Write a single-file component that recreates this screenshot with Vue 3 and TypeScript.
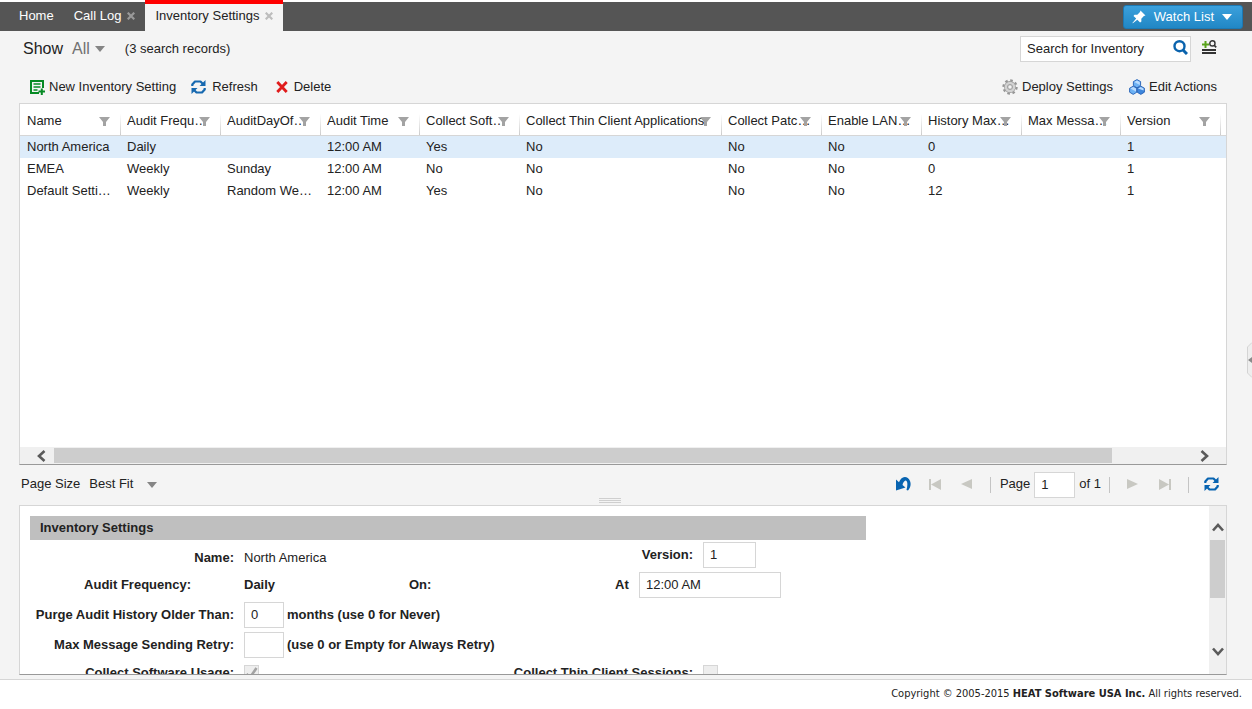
<script setup lang="ts">
import { ref } from 'vue'

interface Column {
  key: string
  title: string
  width: number
}

type Row = Record<string, string>

const columns: Column[] = [
  { key: 'name', title: 'Name', width: 100 },
  { key: 'frequency', title: 'Audit Frequency', width: 100 },
  { key: 'day', title: 'AuditDayOfWeek', width: 100 },
  { key: 'time', title: 'Audit Time', width: 99 },
  { key: 'usage', title: 'Collect Software Usage', width: 100 },
  { key: 'thin', title: 'Collect Thin Client Applications', width: 202 },
  { key: 'patch', title: 'Collect Patches', width: 100 },
  { key: 'lan', title: 'Enable LANDiscovery', width: 100 },
  { key: 'history', title: 'History MaxAge', width: 100 },
  { key: 'retry', title: 'Max Messages', width: 99 },
  { key: 'version', title: 'Version', width: 100 },
]

const rows: Row[] = [
  { name: 'North America', frequency: 'Daily', day: '', time: '12:00 AM', usage: 'Yes', thin: 'No', patch: 'No', lan: 'No', history: '0', retry: '', version: '1' },
  { name: 'EMEA', frequency: 'Weekly', day: 'Sunday', time: '12:00 AM', usage: 'No', thin: 'No', patch: 'No', lan: 'No', history: '0', retry: '', version: '1' },
  { name: 'Default Settings', frequency: 'Weekly', day: 'Random Weekday', time: '12:00 AM', usage: 'Yes', thin: 'No', patch: 'No', lan: 'No', history: '12', retry: '', version: '1' },
]

const selected = ref(0)
const search = ref('')
const page = ref('1')
const version = ref('1')
const auditTime = ref('12:00 AM')
const purgeMonths = ref('0')
const maxRetry = ref('')
</script>

<template>
  <div class="app">
    <header class="topbar">
      <nav class="tabs">
        <a class="tab" href="#home">Home</a>
        <div class="tab">
          <a href="#calllog">Call Log</a>
          <button class="close" type="button" aria-label="Close Call Log">
            <svg width="8" height="8" viewBox="0 0 8 8"><path d="M.7.7l6.600 6.600M7.300.7L.7 7.300" stroke="currentColor" stroke-width="2.200" /></svg>
          </button>
        </div>
        <div class="tab active">
          <a href="#inventory">Inventory Settings</a>
          <button class="close" type="button" aria-label="Close Inventory Settings">
            <svg width="8" height="8" viewBox="0 0 8 8"><path d="M.7.7l6.600 6.600M7.300.7L.7 7.300" stroke="currentColor" stroke-width="2.200" /></svg>
          </button>
        </div>
      </nav>
      <button class="watch" type="button">
        <svg width="14" height="14" viewBox="0 0 14 14">
          <path d="M8.5 0.5l5 5-1.6.6-2.6 2.7.1 2.7-1.3 1L5.3 9.7.8 13.3.4 13l3.8-4.4L1.5 5.9l1-1.2 2.8.1L8 2.1z" fill="#fff" />
        </svg>
        <span>Watch List</span>
        <svg width="10" height="6" viewBox="0 0 10 6"><path d="M0 0h10L5 6z" fill="#fff" /></svg>
      </button>
    </header>

    <section class="filterbar">
      <span class="show">Show</span>
      <button class="all" type="button">
        All
        <svg width="10" height="6" viewBox="0 0 10 6"><path d="M0 0h10L5 6z" fill="#858585" /></svg>
      </button>
      <span class="count">(3 search records)</span>
      <form class="search" @submit.prevent>
        <input v-model="search" type="text" placeholder="Search for Inventory" aria-label="Search for Inventory" />
        <button type="submit" aria-label="Search">
          <svg width="15" height="15" viewBox="0 0 15 15" fill="none" stroke="#0a63ad">
            <circle cx="6.5" cy="6.2" r="5" stroke-width="2.4" />
            <path d="M10 10l4 4" stroke-width="3" />
          </svg>
        </button>
      </form>
      <button class="advanced" type="button" aria-label="Advanced search">
        <svg width="15" height="14" viewBox="0 0 15 14" fill="none">
          <path d="M0 4.5h7M3.5 1v7" stroke="#5aa31c" stroke-width="2" />
          <circle cx="10.4" cy="3.4" r="2.6" stroke="#333" stroke-width="1.4" />
          <path d="M12.2 5.2l2 2.2" stroke="#333" stroke-width="1.6" />
          <path d="M0 10h14M0 13h14" stroke="#333" stroke-width="1.8" />
        </svg>
      </button>
    </section>

    <section class="toolbar">
      <button class="tool new" type="button">
        <svg width="15" height="16" viewBox="0 0 15 16" fill="none" stroke="#068a24">
          <path d="M9 14H1V2h12v7" stroke-width="2" />
          <path d="M3.5 5h7M3.5 8h7M3.5 11h4" stroke-width="1.4" />
          <path d="M8.5 12.5H15M11.8 9.5V16" stroke-width="2" />
        </svg>
        New Inventory Setting
      </button>
      <button class="tool refresh" type="button">
        <svg width="15" height="14" viewBox="0 0 15 14" fill="none">
          <path d="M1.300 6V4.500L4 1.500h5.500L12 4M13.700 8v1.500L11 12.500H5.500L3 10" stroke="#1769b0" stroke-width="2.200" stroke-linejoin="round" />
          <path d="M14.500 0v6H8.500zM.5 14V8h6z" fill="#1769b0" />
        </svg>
        Refresh
      </button>
      <button class="tool delete" type="button">
        <svg width="12" height="12" viewBox="0 0 12 12"><path d="M1.3 1l9.4 10M10.7 1L1.3 11" stroke="#e01b1b" stroke-width="2.8" /></svg>
        Delete
      </button>
      <button class="tool deploy" type="button">
        <svg width="16" height="16" viewBox="0 0 16 16">
          <circle cx="8" cy="8" r="6.600" fill="none" stroke="#969696" stroke-width="2.200" stroke-dasharray="2.600 2.584" />
          <circle cx="8" cy="8" r="4" fill="none" stroke="#969696" stroke-width="3.800" />
          <circle cx="8" cy="8" r="4" fill="none" stroke="#d2d2d2" stroke-width="2.600" />
          <circle cx="8" cy="8" r="2.200" fill="#f4f4f4" stroke="#999" stroke-width=".8" />
        </svg>
        Deploy Settings
      </button>
      <button class="tool edit" type="button">
        <svg width="16" height="16" viewBox="0 0 16 16" stroke="#2460b5" stroke-width=".9">
          <path d="M8 .6l3.6 2v4L8 8.8l-3.600-2.200v-4z" fill="#6db2f4" />
          <path d="M4.2 7.2l3.6 2v4l-3.6 2.2-3.6-2.2v-4z" fill="#6db2f4" />
          <path d="M11.8 7.2l3.6 2v4l-3.6 2.2-3.6-2.2v-4z" fill="#3d86dc" />
          <path d="M8 1.400l2.800 1.500v3L5.200 2.900zM4.200 8l2.800 1.500v3L1.400 9.500zM11.800 8l2.800 1.500v2L9 9.500z" fill="#b9dcff" stroke="none" />
        </svg>
        Edit Actions
      </button>
    </section>

    <section class="gridpanel">
      <div class="gridbody">
        <table class="grid">
          <colgroup>
            <col v-for="c in columns" :key="c.key" :style="{ width: c.width + 'px' }" />
            <col />
          </colgroup>
          <thead>
            <tr>
              <th v-for="c in columns" :key="c.key" scope="col">
                <span class="title">{{ c.title }}</span>
                <button class="filter" type="button" :aria-label="'Filter ' + c.title">
                  <svg width="11" height="9" viewBox="0 0 11 9"><path d="M0 0h11L7 5v4H4V5z" fill="#a3a3a3" /></svg>
                </button>
              </th>
              <th class="filler" aria-hidden="true"></th>
            </tr>
          </thead>
          <tbody>
            <tr v-for="(r, i) in rows" :key="i" :class="{ selected: i === selected }" @click="selected = i">
              <td v-for="c in columns" :key="c.key">{{ r[c.key] }}</td>
              <td class="filler"></td>
            </tr>
          </tbody>
        </table>
      </div>
      <div class="hscroll">
        <button type="button" aria-label="Scroll left">
          <svg width="10" height="12" viewBox="0 0 10 12"><path d="M8.5 1L3 6l5.5 5" fill="none" stroke="#5a5a5a" stroke-width="2.6" /></svg>
        </button>
        <div class="track"><div class="thumb"></div></div>
        <button class="end" type="button" aria-label="Scroll right">
          <svg width="10" height="12" viewBox="0 0 10 12"><path d="M1.5 1L7 6l-5.5 5" fill="none" stroke="#5a5a5a" stroke-width="2.6" /></svg>
        </button>
      </div>
    </section>

    <section class="pager">
      <label for="pagesize">Page Size</label>
      <div class="sizebox">
        <select id="pagesize">
          <option>Best Fit</option>
          <option>25</option>
          <option>50</option>
        </select>
        <svg width="10" height="6" viewBox="0 0 10 6"><path d="M0 0h10L5 6z" fill="#858585" /></svg>
      </div>
      <div class="pages">
        <button class="undo" type="button" aria-label="Undo">
          <svg width="15" height="14" viewBox="0 0 15 14">
            <path d="M0 2.500V13.500L9.500 10.500 6.500 8C7 5.500 8.500 3.200 9.800 3.500c1.900.5 2 4.500.7 9.500l1.500.5C14.500 11 15.300 7 14 4 12.500.3 9 -.8 6.500.8 4.800 1.800 3.700 3.500 3 5.200z" fill="#0864b1" />
          </svg>
        </button>
        <button class="first" type="button" aria-label="First page">
          <svg width="12" height="11" viewBox="0 0 12 11"><path d="M0 0h2v11H0zM12 0v11L2 5.500z" fill="#c8c8c2" /></svg>
        </button>
        <button class="prev" type="button" aria-label="Previous page">
          <svg width="11" height="10" viewBox="0 0 11 10"><path d="M11 0v10L0 5z" fill="#c8c8c2" /></svg>
        </button>
        <i class="sep"></i>
        <label for="page">Page</label>
        <input id="page" v-model="page" type="text" />
        <span class="of">of 1</span>
        <i class="sep"></i>
        <button class="next" type="button" aria-label="Next page">
          <svg width="11" height="10" viewBox="0 0 11 10"><path d="M0 0v10l11-5z" fill="#c8c8c2" /></svg>
        </button>
        <button class="last" type="button" aria-label="Last page">
          <svg width="12" height="11" viewBox="0 0 12 11"><path d="M10 0h2v11h-2zM0 0v11l10-5.500z" fill="#c8c8c2" /></svg>
        </button>
        <i class="sep"></i>
        <button class="reload" type="button" aria-label="Reload">
          <svg width="15" height="14" viewBox="0 0 15 14" fill="none">
            <path d="M1.300 6V4.500L4 1.500h5.500L12 4M13.700 8v1.500L11 12.500H5.500L3 10" stroke="#0864b1" stroke-width="2.200" stroke-linejoin="round" />
            <path d="M14.500 0v6H8.500zM.5 14V8h6z" fill="#0864b1" />
          </svg>
        </button>
      </div>
    </section>

    <div class="grip"><i></i><i></i><i></i></div>

    <section class="detail">
      <form class="form" @submit.prevent>
        <h2>Inventory Settings</h2>
        <div class="row name">
          <span class="lab">Name:</span>
          <span class="value">North America</span>
          <label class="lab" for="version">Version:</label>
          <div class="field"><input id="version" v-model="version" class="w53" type="text" /></div>
        </div>
        <div class="row schedule">
          <span class="lab freq">Audit Frequency:</span>
          <b>Daily</b>
          <b>On:</b>
          <label for="at">At</label>
          <input id="at" v-model="auditTime" class="w142" type="text" />
        </div>
        <div class="row">
          <label class="lab" for="purge">Purge Audit History Older Than:</label>
          <div class="field"><input id="purge" v-model="purgeMonths" class="w40" type="text" /><b>months (use 0 for Never)</b></div>
        </div>
        <div class="row">
          <label class="lab" for="retry">Max Message Sending Retry:</label>
          <div class="field"><input id="retry" v-model="maxRetry" class="w40" type="text" /><b>(use 0 or Empty for Always Retry)</b></div>
        </div>
        <div class="row short">
          <label class="lab" for="usage">Collect Software Usage:</label>
          <div class="field check">
            <input id="usage" type="checkbox" checked disabled />
            <svg width="13" height="12" viewBox="0 0 13 12"><path d="M1.500 7l3.500 3.500L11.500 1" fill="none" stroke="#a3a3a3" stroke-width="2.600" /></svg>
          </div>
          <label class="lab" for="sessions">Collect Thin Client Sessions:</label>
          <div class="field check"><input id="sessions" type="checkbox" disabled /></div>
        </div>
      </form>
      <div class="vscroll">
        <button type="button" aria-label="Scroll up">
          <svg width="12" height="10" viewBox="0 0 12 10"><path d="M1 8.500L6 3l5 5.500" fill="none" stroke="#5a5a5a" stroke-width="2.600" /></svg>
        </button>
        <div class="track"><div class="thumb"></div></div>
        <button class="end" type="button" aria-label="Scroll down">
          <svg width="12" height="10" viewBox="0 0 12 10"><path d="M1 1.500L6 7l5-5.500" fill="none" stroke="#5a5a5a" stroke-width="2.600" /></svg>
        </button>
      </div>
    </section>

    <footer class="footer">Copyright © 2005-2015 <b>HEAT Software USA Inc.</b> All rights reserved.</footer>

    <button class="collapse" type="button" aria-label="Expand side panel">
      <svg width="5" height="36" viewBox="0 0 5 36">
        <path d="M5 .5L.5 5v26L5 35.500" fill="#eee" stroke="#d4d4d4" />
        <path d="M5 15v6L1 18z" fill="#8a8a8a" />
      </svg>
    </button>
  </div>
</template>

<style>
html,
body {
  margin: 0;
  background: #fff;
}
</style>

<style scoped>
.app {
  position: relative;
  display: flex;
  flex-direction: column;
  min-height: 100vh;
  background: #f4f4f4;
  color: #222;
  font: 13px/16px "Liberation Sans", Arial, sans-serif;
  overflow: hidden;
}
.app * {
  box-sizing: border-box;
}
button {
  display: inline-flex;
  align-items: center;
  padding: 0;
  border: 0;
  background: none;
  color: inherit;
  font: inherit;
  white-space: nowrap;
  cursor: pointer;
}
svg {
  display: block;
  flex: none;
}
a {
  color: inherit;
  text-decoration: none;
}
input[type="text"] {
  height: 26px;
  margin: 0;
  padding: 0 6px 2px;
  border: 1px solid #d6d6d6;
  border-radius: 0;
  background: #fff;
  color: #222;
  font: inherit;
  outline: none;
}

.topbar {
  display: flex;
  justify-content: space-between;
  align-items: flex-start;
  height: 31px;
  padding-right: 9px;
  background: linear-gradient(#fff 2px, #555 2px);
}
.tabs {
  display: flex;
  padding-left: 9px;
  color: #fff;
}
.tab {
  display: flex;
  align-items: center;
  gap: 6px;
  height: 31px;
  padding: 0 10px;
}
.close {
  color: #999;
}
.active {
  border-top: 4px solid #f00;
  padding-bottom: 4px;
  background: #f4f4f4;
  color: #222;
}
.active .close {
  color: #bdbdbd;
}
.watch {
  gap: 8px;
  height: 24px;
  margin-top: 5px;
  padding: 0 10px 0 8px;
  border: 1px solid #1c79b4;
  border-radius: 3px;
  background: linear-gradient(#3ba0dc, #2187c5);
  color: #fff;
}

.filterbar {
  display: flex;
  align-items: center;
  height: 35px;
  padding: 0 35px 0 23px;
}
.show {
  font-size: 16px;
}
.all {
  gap: 5px;
  margin-left: 9px;
  color: #707070;
  font-size: 16px;
}
.count {
  margin-left: 20px;
}
.search {
  position: relative;
  width: 171px;
  margin-left: auto;
}
.search input {
  width: 100%;
  padding: 0 24px 0 6px;
}
.search input::placeholder {
  color: #222;
  opacity: 1;
}
.search button {
  position: absolute;
  right: 3px;
  top: 4px;
}
.advanced {
  margin: 0 0 3px 11px;
}

.toolbar {
  display: flex;
  align-items: center;
  height: 37px;
  padding: 4px 35px 0 30px;
}
.tool {
  gap: 4px;
}
.refresh {
  gap: 6px;
  margin-left: 15px;
}
.delete {
  gap: 6px;
  margin-left: 18px;
}
.deploy {
  margin-left: auto;
}
.edit {
  margin-left: 16px;
}

.gridpanel {
  display: flex;
  flex: 1;
  flex-direction: column;
  min-height: 200px;
  margin: 0 25px 0 19px;
  border: 1px solid #d6d6d6;
  border-bottom-color: #999;
  background: #fff;
}
.gridbody {
  flex: 1;
  overflow: hidden;
}
.grid {
  width: 100%;
  border-collapse: separate;
  border-spacing: 0;
  table-layout: fixed;
}
th,
td {
  overflow: hidden;
  padding: 0 6px 0 7px;
  font-weight: normal;
  text-align: left;
  text-overflow: ellipsis;
  white-space: nowrap;
}
th {
  position: relative;
  height: 32px;
  padding: 2px 8px 0 7px;
  border-bottom: 1px solid #d6d6d6;
}
th + th {
  background: linear-gradient(transparent 10px, #ccc) left / 1px 100% no-repeat;
}
.title {
  display: block;
  overflow: hidden;
  text-overflow: ellipsis;
}
.filter {
  position: absolute;
  top: 13px;
  right: 10px;
}
td {
  height: 22px;
}
.filler {
  padding: 0;
}
.selected td {
  background: #ddecfa;
}

.hscroll {
  display: flex;
  height: 17px;
  background: #f0f0f0;
}
.hscroll button {
  width: 34px;
  padding-left: 16px;
}
.hscroll .end {
  padding-left: 8px;
}
.hscroll .track {
  flex: 1;
  padding: 1px 0;
}
.hscroll .thumb {
  width: 93%;
  height: 100%;
  background: #cdcdcd;
}

.pager {
  display: flex;
  align-items: center;
  height: 33px;
  padding: 7px 33px 0 21px;
}
.pager label,
.of,
.sizebox select {
  padding-bottom: 2px;
}
.sizebox {
  position: relative;
  display: flex;
  align-items: center;
  margin-left: 9px;
}
.sizebox select {
  width: 70px;
  margin: 0;
  border: 0;
  appearance: none;
  background: none;
  color: inherit;
  font: inherit;
  outline: none;
}
.sizebox svg {
  position: absolute;
  right: 2px;
  pointer-events: none;
}
.pages {
  display: flex;
  align-items: center;
  margin-left: auto;
}
.pages button {
  padding-bottom: 2px;
}
.first {
  margin-left: 18px;
}
.prev {
  margin: 0 18px 0 20px;
}
.sep {
  width: 1px;
  height: 16px;
  background: #c4c4c4;
}
.pages label {
  margin: 0 4px 0 9px;
}
.pages input {
  width: 41px;
}
.of {
  margin: 0 8px 0 4px;
}
.next {
  margin-left: 17px;
}
.last {
  margin: 0 17px 0 21px;
}
.reload {
  margin-left: 15px;
}

.grip {
  display: flex;
  flex-direction: column;
  align-items: center;
  gap: 1px;
  height: 7px;
  padding-right: 32px;
}
.grip i {
  width: 22px;
  height: 1px;
  background: #cfcfcf;
}

.detail {
  display: flex;
  justify-content: space-between;
  height: 170px;
  margin: 0 25px 4px 19px;
  border: 1px solid #d6d6d6;
  border-bottom-color: #999;
  background: #fff;
  overflow: hidden;
}
.form {
  width: 836px;
  margin: 10px 0 0 10px;
}
h2 {
  margin: 0;
  padding: 0 10px;
  background: #bfbfbf;
  font-size: 13px;
  line-height: 24px;
}
.row {
  display: grid;
  grid-template-columns: 204px 1fr 180px 163px;
  column-gap: 10px;
  align-items: center;
  height: 30px;
  white-space: nowrap;
}
.row label {
  font-weight: bold;
}
.row .lab {
  font-weight: bold;
  text-align: right;
}
.name > span {
  padding-top: 6px;
}
.schedule {
  grid-template-columns: 214px 165px 206px 24px 1fr;
  column-gap: 0;
}
.row .freq {
  padding-right: 53px;
}
.field {
  display: flex;
  align-items: center;
  gap: 3px;
}
.w40 {
  width: 40px;
}
.w53 {
  width: 53px;
}
.w142 {
  width: 142px;
}
.short {
  height: 25px;
}
.check {
  position: relative;
}
.check input {
  width: 15px;
  height: 15px;
  margin: 0;
  border: 1px solid #d6d6d6;
  appearance: none;
  background: #eee;
}
.check svg {
  position: absolute;
  left: 1px;
}

.vscroll {
  display: flex;
  flex-direction: column;
  width: 17px;
  background: #f0f0f0;
}
.vscroll button {
  justify-content: center;
  height: 34px;
  padding-top: 8px;
}
.vscroll .end {
  padding: 0 0 10px;
}
.vscroll .track {
  flex: 1;
  padding: 0 1px;
}
.vscroll .thumb {
  height: 58%;
  background: #cdcdcd;
}

.footer {
  min-height: 30px;
  padding: 6px 10px;
  border-top: 1px solid #d6d6d6;
  background: #fff;
  font-family: "DejaVu Sans Condensed", Tahoma, sans-serif;
  font-size: 11px;
  text-align: right;
}
.collapse {
  position: absolute;
  top: 342px;
  right: 0;
}
</style>
